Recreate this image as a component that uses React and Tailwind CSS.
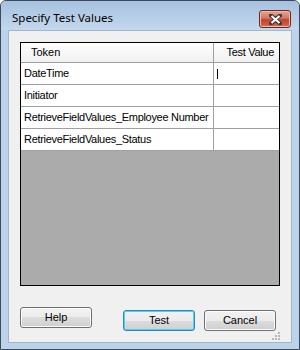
import React from "react";

const rows = [
  "DateTime",
  "Initiator",
  "RetrieveFieldValues_Employee Number",
  "RetrieveFieldValues_Status",
];

const Button = ({ label, focused }) => (
  <button
    className={`h-[21px] w-[72px] rounded-[3px] border text-[11px] text-black ${
      focused
        ? "border-[#3c7fb1] shadow-[inset_0_0_0_1px_#48d6f8]"
        : "border-[#707070] shadow-[inset_0_0_0_1px_#fcfcfc]"
    } bg-[linear-gradient(#f2f2f2_0%,#ebebeb_50%,#dddddd_50%,#cfcfcf_100%)]`}
  >
    {label}
  </button>
);

export default function App() {
  return (
    <div className="h-[350px] w-[300px] font-['Liberation_Sans',Arial,sans-serif]">
      <div className="flex h-full w-full flex-col rounded-t-[6px] border border-[#3b4a5c] bg-[#bdd3ea]">
        {/* title bar */}
        <div className="flex h-[29px] items-start justify-between rounded-t-[5px] bg-[linear-gradient(#a6c1df,#c4d8ed)] pl-[11px] pr-[8px]">
          <span className="mt-[11px] font-['Noto_Sans',sans-serif] text-[11.5px] leading-none text-black">
            Specify Test Values
          </span>
          <div className="mt-[9px] flex h-[18px] w-[32px] items-center justify-center rounded-[3px] border border-[#6b2a1e] bg-[linear-gradient(#e8a493_0%,#d47562_45%,#c0432b_55%,#d26b51_100%)] shadow-[inset_0_0_0_1px_#f2b7a8]">
            <svg width="13" height="11" viewBox="0 0 13 11">
              <path
                d="M2 1.5 L6.5 5 L11 1.5 M2 9.5 L6.5 6 L11 9.5"
                fill="none"
                stroke="#3a3a3a"
                strokeWidth="4"
                strokeLinecap="square"
              />
              <path
                d="M2.5 2 L6.5 5.5 L10.5 2 M2.5 9 L6.5 5.5 L10.5 9"
                fill="none"
                stroke="#ffffff"
                strokeWidth="2"
              />
            </svg>
          </div>
        </div>
        {/* client area */}
        <div className="mx-[7px] mb-[6px] flex flex-1 flex-col border border-[#9fb6d0] bg-[#f0f0f0] px-[11px] pt-[11px]">
          <div className="flex h-[244px] w-[260px] flex-col border border-black bg-[#ababab]">
            <div className="flex h-[20px] border-b border-[#a0a0a0] bg-[linear-gradient(#ffffff,#f0f0f0)] text-[11px] leading-none">
              <div className="flex w-[193px] items-center border-r border-[#a0a0a0] pl-[10px]">
                Token
              </div>
              <div className="flex flex-1 items-center justify-end pr-[5px] tracking-[-0.3px]">
                Test Value
              </div>
            </div>
            {rows.map((r, i) => (
              <div
                key={r}
                className="flex h-[22px] border-b border-[#a0a0a0] bg-white text-[11px] leading-none"
              >
                <div className="flex w-[193px] items-center overflow-hidden whitespace-nowrap border-r border-[#a0a0a0] pl-[3px] tracking-[-0.3px]">
                  {r}
                </div>
                <div className="flex flex-1 items-center pl-[3px]">
                  {i === 0 && <div className="h-[10px] w-px bg-black" />}
                </div>
              </div>
            ))}
          </div>
          <div className="mt-[21px] flex">
            <Button label="Help" />
            <div className="ml-[31px]">
              <Button label="Test" focused />
            </div>
            <div className="ml-[9px]">
              <Button label="Cancel" />
            </div>
          </div>
          <div className="mt-auto mb-[2px] flex justify-end">
            <svg width="8" height="8" viewBox="0 0 8 8">
              {[
                [6, 0],
                [6, 3],
                [3, 3],
                [6, 6],
                [3, 6],
                [0, 6],
              ].map(([x, y], k) => (
                <rect key={k} x={x} y={y} width="2" height="2" fill="#b8b8b8" />
              ))}
            </svg>
          </div>
        </div>
      </div>
    </div>
  );
}
